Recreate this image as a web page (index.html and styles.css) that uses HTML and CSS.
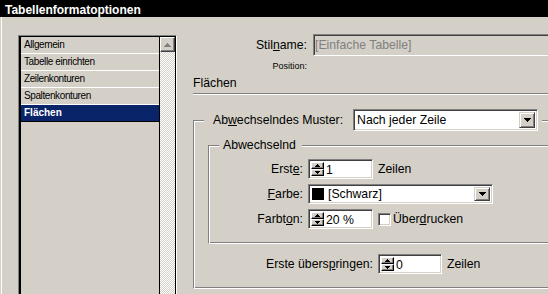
FILE: index.html
```html
<!DOCTYPE html>
<html lang="de">
<head>
    <meta charset="UTF-8">
    <meta name="viewport" content="width=device-width, initial-scale=1.0">
    <title>Tabellenformatoptionen</title>
    <link rel="stylesheet" href="styles.css">
</head>
<body>
    <div class="titlebar">Tabellenformatoptionen</div>

    <div class="dialog">
        <div class="listbox">
            <div class="listbox-inner">
                <ul class="items">
                    <li>Allgemein</li>
                    <li>Tabelle einrichten</li>
                    <li>Zeilenkonturen</li>
                    <li>Spaltenkonturen</li>
                    <li class="selected">Flächen</li>
                </ul>
                <div class="scrollbar">
                    <div class="scroll-btn">
                        <svg width="7" height="4"><path d="M3 0H4V1H5V2H6V3H7V4H0V3H1V2H2V1H3Z" fill="#808080"/></svg>
                    </div>
                </div>
            </div>
        </div>

        <div class="main">
            <div class="stil-row">
                <span class="stil-label">Stil<u>n</u>ame:</span>
                <div class="field disabled">[Einfache Tabelle]</div>
            </div>
            <div class="position">Position:</div>
            <div class="section-title">Flächen</div>
            <div class="separator"></div>

            <fieldset class="group outer">
                <legend class="outer-legend">
                    <div class="legend-row">
                        <span>Ab<u>w</u>echselndes Muster:</span>
                        <div class="select pattern">
                            <span class="select-text">Nach jeder Zeile</span>
                            <span class="drop-btn"><svg width="7" height="4"><path d="M0 0H7V1H6V2H5V3H4V4H3V3H2V2H1V1H0Z"/></svg></span>
                        </div>
                    </div>
                </legend>

                <fieldset class="group inner">
                    <legend class="inner-legend">Abwechselnd</legend>

                    <div class="row">
                        <span class="row-label">Erst<u>e</u>:</span>
                        <div class="spin">
                            <div class="spin-btns">
                                <span class="spin-btn"><svg width="5" height="3"><path d="M2 0H3V1H4V2H5V3H0V2H1V1H2Z"/></svg></span>
                                <span class="spin-btn"><svg width="5" height="3"><path d="M0 0H5V1H4V2H3V3H2V2H1V1H0Z"/></svg></span>
                            </div>
                            <span class="spin-value">1</span>
                        </div>
                        <span class="unit">Zeilen</span>
                    </div>

                    <div class="row">
                        <span class="row-label"><u>F</u>arbe:</span>
                        <div class="select colour">
                            <span class="swatch"></span>
                            <span class="select-text">[Schwarz]</span>
                            <span class="drop-btn"><svg width="7" height="4"><path d="M0 0H7V1H6V2H5V3H4V4H3V3H2V2H1V1H0Z"/></svg></span>
                        </div>
                    </div>

                    <div class="row">
                        <span class="row-label">Farbt<u>o</u>n:</span>
                        <div class="spin">
                            <div class="spin-btns">
                                <span class="spin-btn"><svg width="5" height="3"><path d="M2 0H3V1H4V2H5V3H0V2H1V1H2Z"/></svg></span>
                                <span class="spin-btn"><svg width="5" height="3"><path d="M0 0H5V1H4V2H3V3H2V2H1V1H0Z"/></svg></span>
                            </div>
                            <span class="spin-value">20 %</span>
                        </div>
                        <span class="checkbox"></span>
                        <span>Über<u>d</u>rucken</span>
                    </div>
                </fieldset>

                <div class="row skip-row">
                    <span class="row-label">Erste übers<u>p</u>ringen:</span>
                    <div class="spin">
                        <div class="spin-btns">
                            <span class="spin-btn"><svg width="5" height="3"><path d="M2 0H3V1H4V2H5V3H0V2H1V1H2Z"/></svg></span>
                            <span class="spin-btn"><svg width="5" height="3"><path d="M0 0H5V1H4V2H3V3H2V2H1V1H0Z"/></svg></span>
                        </div>
                        <span class="spin-value">0</span>
                    </div>
                    <span class="unit">Zeilen</span>
                </div>
            </fieldset>
        </div>
    </div>
</body>
</html>
```

FILE: styles.css
```css
body {
    margin: 0;
    width: 548px;
    height: 294px;
    overflow: hidden;
    background: #d4d0c8;
    font-family: "Liberation Sans", Arial, sans-serif;
    font-size: 12.25px;
    color: #000;
}

.titlebar {
    height: 17px;
    box-sizing: border-box;
    padding: 4px 0 0 5px;
    line-height: 13px;
    background: #000;
    color: #fff;
    font-size: 12px;
    font-weight: bold;
}

.dialog {
    display: flex;
    align-items: flex-start;
    margin-left: 1px;
    border-left: 1px solid #fff;
    height: 277px;
}

/* list on the left, runs on past the bottom edge */
.listbox {
    flex: none;
    margin: 18px 0 0 16px;
    width: 159px;
    height: 259px;
    box-sizing: border-box;
    border: 1px solid;
    border-bottom: 0;
    border-color: #808080 #fff #fff #808080;
}
.listbox-inner {
    display: flex;
    height: 100%;
    box-sizing: border-box;
    border: 1px solid #000;
    border-left-width: 2px;
    border-bottom: 0;
}
.items {
    width: 138px;
    margin: 0;
    padding: 0;
    list-style: none;
    font-size: 10px;
    letter-spacing: -0.4px;
}
.items li {
    height: 16px;
    line-height: 16px;
    padding-left: 3px;
    border-bottom: 1px solid #fff;
}
.items li.selected {
    background: #0a246a;
    color: #fff;
    font-weight: bold;
    letter-spacing: 0;
    border-bottom-color: #000;
}
.scrollbar {
    width: 15px;
    border-left: 1px solid #000;
    background: repeating-conic-gradient(#fff 0 25%, #d4d0c8 0 50%) 0 0 / 2px 2px;
}
.scroll-btn {
    height: 15px;
    box-sizing: border-box;
    display: flex;
    align-items: center;
    justify-content: center;
    background: #d4d0c8;
    border: 1px solid;
    border-color: #fff #404040 #404040 #fff;
    box-shadow: inset -1px -1px #808080;
}
svg {
    display: block;
}

/* right side, cut off by the right edge */
.main {
    flex: none;
    width: 355px;
    margin-left: 16px;
    padding-top: 17px;
}
.stil-row {
    display: flex;
    align-items: center;
    height: 22px;
}
.stil-label {
    width: 114px;
    margin-right: 6px;
    text-align: right;
}
.field {
    flex: 1;
    height: 22px;
    box-sizing: border-box;
    padding-left: 1px;
    line-height: 20px;
    border: 1px solid;
    border-right: 0;
    border-color: #808080 #fff #fff #808080;
    box-shadow: inset 1px 1px #404040, inset 0 -1px #d4d0c8;
}
.field.disabled {
    color: #808080;
}
.position {
    width: 114px;
    margin-top: 4px;
    text-align: right;
    font-size: 9px;
    line-height: 12px;
}
.section-title {
    margin-top: 4px;
    line-height: 14px;
}
.separator {
    margin-top: 3px;
    border-top: 1px solid #808080;
    border-bottom: 1px solid #fff;
}

/* etched group boxes */
.group {
    margin: 0;
    padding: 0;
    min-inline-size: 0;
    border: 1px solid;
    border-right: 0;
    border-color: #808080 #fff #fff #808080;
    box-shadow: inset 1px 1px #fff, inset 0 -1px #808080;
}
.group legend {
    background: #d4d0c8;
    margin-left: 10px;
}
.outer {
    margin-top: 14px;
    padding-bottom: 14px;
}
.outer-legend {
    padding: 0 4px 0 9px;
}
.legend-row {
    display: flex;
    align-items: center;
}
.inner {
    margin: 7px 0 10px 14px;
    padding: 7px 0 14px;
}
.inner-legend {
    padding: 0 6px 0 4px;
    line-height: 14px;
}

.row {
    display: flex;
    align-items: center;
    height: 20px;
}
.row + .row {
    margin-top: 5px;
}
.row-label {
    width: 94px;
    margin-right: 5px;
    text-align: right;
}
.skip-row .row-label {
    width: 179px;
}
.unit {
    margin-left: 5px;
}

/* sunken controls */
.select,
.spin,
.checkbox {
    box-sizing: border-box;
    background: #fff;
    border: 1px solid;
    border-color: #808080 #fff #fff #808080;
    box-shadow: inset 1px 1px #404040, inset -1px -1px #d4d0c8;
}
.select {
    display: flex;
    align-items: center;
    padding: 2px;
}
.select.pattern {
    width: 185px;
    height: 22px;
    margin-left: 10px;
}
.select.colour {
    width: 185px;
    height: 20px;
}
.select-text {
    flex: 1;
    padding-left: 1px;
}
.swatch {
    width: 12px;
    height: 12px;
    margin: 0 3px 0 1px;
    background: #000;
}
.drop-btn {
    width: 16px;
    align-self: stretch;
    box-sizing: border-box;
    display: flex;
    align-items: center;
    justify-content: center;
    background: #d4d0c8;
    border: 1px solid;
    border-color: #d4d0c8 #404040 #404040 #d4d0c8;
    box-shadow: inset 1px 1px #fff, inset -1px -1px #808080;
}

.spin {
    display: flex;
    width: 65px;
    height: 20px;
    padding: 2px;
}
.skip-row .spin {
    width: 64px;
}
.spin-btns {
    width: 13px;
    display: flex;
    flex-direction: column;
}
.spin-btn {
    flex: 1;
    display: flex;
    align-items: center;
    justify-content: center;
    background: #d4d0c8;
    border: 1px solid;
    border-color: #fff #000 #000 #fff;
    box-shadow: inset -1px -1px #808080;
}
.spin-value {
    flex: 1;
    padding-left: 2px;
    line-height: 16px;
}

.checkbox {
    width: 13px;
    height: 13px;
    margin: 0 2px 0 5px;
}
```
